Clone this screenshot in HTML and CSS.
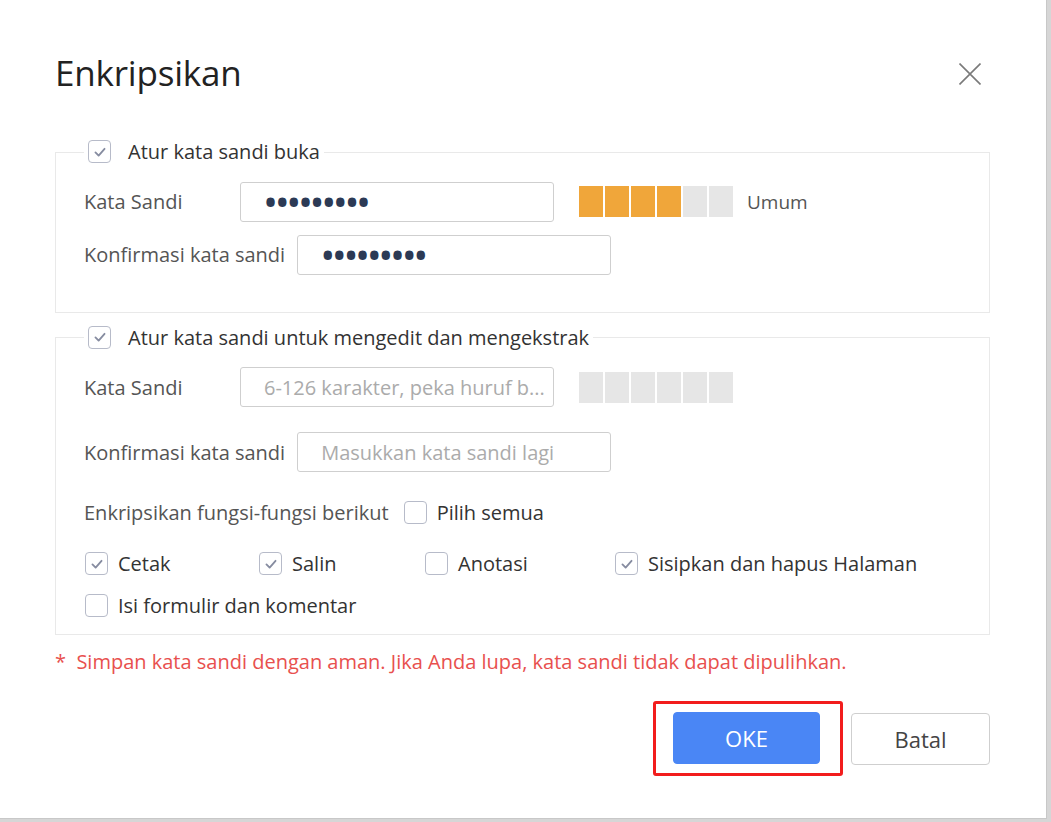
FILE: index.html
```html
<!DOCTYPE html>
<html lang="id">
<head>
    <meta charset="UTF-8">
    <meta name="viewport" content="width=device-width, initial-scale=1.0">
    <title>Enkripsikan</title>
    <link rel="stylesheet" href="styles.css">
</head>
<body>
    <div class="dialog">
        <div class="dialog-head">
            <h1>Enkripsikan</h1>
            <button class="close-btn" aria-label="Tutup">
                <svg width="22" height="22" viewBox="0 0 22 22"><path d="M0.5 0.5L21.5 21.5M21.5 0.5L0.5 21.5" stroke="#7a7a7a" stroke-width="1.6" fill="none"/></svg>
            </button>
        </div>

        <fieldset class="group" id="openGroup">
            <legend>
                <label class="check"><span class="box on"><svg viewBox="0 0 22 22"><path d="M6 11.5l3.5 3.5 6.5-7.5" /></svg></span>Atur kata sandi buka</label>
            </legend>
            <div class="row first">
                <label class="field-label" for="pw1">Kata Sandi</label>
                <input class="input pw" type="password" id="pw1" value="123456789">
                <div class="meter">
                    <span class="bar fill"></span><span class="bar fill"></span><span class="bar fill"></span><span class="bar fill"></span><span class="bar"></span><span class="bar"></span>
                </div>
                <span class="meter-text">Umum</span>
            </div>
            <div class="row second">
                <label class="field-label" for="pw1c">Konfirmasi kata sandi</label>
                <input class="input pw" type="password" id="pw1c" value="123456789" autofocus>
            </div>
        </fieldset>

        <fieldset class="group" id="editGroup">
            <legend>
                <label class="check"><span class="box on"><svg viewBox="0 0 22 22"><path d="M6 11.5l3.5 3.5 6.5-7.5" /></svg></span>Atur kata sandi untuk mengedit dan mengekstrak</label>
            </legend>
            <div class="row first">
                <label class="field-label" for="pw2">Kata Sandi</label>
                <input class="input" type="password" id="pw2" placeholder="6-126 karakter, peka huruf b...">
                <div class="meter">
                    <span class="bar"></span><span class="bar"></span><span class="bar"></span><span class="bar"></span><span class="bar"></span><span class="bar"></span>
                </div>
            </div>
            <div class="row third">
                <label class="field-label" for="pw2c">Konfirmasi kata sandi</label>
                <input class="input" type="password" id="pw2c" placeholder="Masukkan kata sandi lagi">
            </div>
            <div class="row funcs">
                <span class="field-label plain">Enkripsikan fungsi-fungsi berikut</span>
                <label class="check"><span class="box"></span>Pilih semua</label>
            </div>
            <div class="perms">
                <label class="check"><span class="box on"><svg viewBox="0 0 22 22"><path d="M6 11.5l3.5 3.5 6.5-7.5" /></svg></span>Cetak</label>
                <label class="check"><span class="box on"><svg viewBox="0 0 22 22"><path d="M6 11.5l3.5 3.5 6.5-7.5" /></svg></span>Salin</label>
                <label class="check"><span class="box"></span>Anotasi</label>
                <label class="check"><span class="box on"><svg viewBox="0 0 22 22"><path d="M6 11.5l3.5 3.5 6.5-7.5" /></svg></span>Sisipkan dan hapus Halaman</label>
                <label class="check wide"><span class="box"></span>Isi formulir dan komentar</label>
            </div>
        </fieldset>

        <p class="warning">*&nbsp; Simpan kata sandi dengan aman. Jika Anda lupa, kata sandi tidak dapat dipulihkan.</p>

        <div class="actions">
            <span class="highlight"><button class="btn primary">OKE</button></span>
            <button class="btn">Batal</button>
        </div>
    </div>
</body>
</html>
```

FILE: styles.css
```css
html, body {
    margin: 0;
    padding: 0;
}
body {
    background: #d6d6d6;
    font-family: "Open Sans", "Noto Sans", sans-serif;
    color: #333;
}
.dialog {
    width: 1047px;
    height: 819px;
    background: #fff;
    box-sizing: border-box;
    border-right: 1px solid #c8c8c8;
    border-bottom: 1px solid #c8c8c8;
    padding: 0 56px 0 55px;
}
.dialog-head {
    display: flex;
    justify-content: space-between;
    align-items: flex-start;
    height: 138px;
    padding-top: 49px;
    box-sizing: border-box;
}
.dialog-head h1 {
    margin: 0;
    font-weight: 400;
    font-size: 35px;
    line-height: 48px;
    color: #222;
    letter-spacing: -0.2px;
}
.close-btn {
    background: none;
    border: none;
    padding: 0;
    margin: 14px 9px 0 0;
    cursor: pointer;
    width: 22px;
    height: 22px;
}
.close-btn svg {
    display: block;
}
.group {
    border: 1px solid #e9e9e9;
    margin: 0;
    padding: 0 28px;
    min-width: 0;
}
#editGroup {
    margin-top: 11px;
}
.group legend {
    padding: 0 4px;
    margin-left: 0;
}
.group legend .box {
    margin-right: 17px;
}
.check {
    display: inline-flex;
    align-items: center;
    font-size: 20px;
    line-height: 27px;
    color: #333;
    cursor: pointer;
    white-space: nowrap;
}
.box {
    flex: none;
    width: 23px;
    height: 23px;
    box-sizing: border-box;
    border: 1.5px solid #b7bbc9;
    border-radius: 4px;
    background: #fff;
    margin-right: 10px;
    display: inline-flex;
    align-items: center;
    justify-content: center;
}
.box svg {
    width: 20px;
    height: 20px;
}
.box svg path {
    fill: none;
    stroke: #868ca0;
    stroke-width: 2;
    stroke-linecap: round;
    stroke-linejoin: round;
}
.row {
    display: flex;
    align-items: center;
}
.row.first {
    margin-top: 15px;
}
.row.second {
    margin-top: 13px;
    margin-bottom: 37px;
}
.row.third {
    margin-top: 25px;
}
.field-label {
    min-width: 144px;
    margin-right: 12px;
    font-size: 20px;
    color: #555;
}
.field-label.plain {
    min-width: 0;
    margin-right: 15px;
}
.input {
    width: 314px;
    height: 40px;
    box-sizing: border-box;
    border: 1px solid #cfcfcf;
    border-radius: 3px;
    padding: 0 2px 0 23px;
    font-family: "Open Sans", "Noto Sans", sans-serif;
    font-size: 20px;
    color: #333;
    outline: none;
    text-overflow: ellipsis;
}
.input::placeholder {
    color: #ababab;
}
.input.pw {
    font-size: 40px;
    letter-spacing: -3.4px;
    padding-left: 22px;
    color: #2c3a55;
    caret-color: #000;
}
.meter {
    display: flex;
    gap: 2px;
    margin-left: 25px;
}
.bar {
    width: 24px;
    height: 31px;
    background: #e6e6e6;
}
.bar.fill {
    background: #f0a63a;
}
.meter-text {
    margin-left: 14px;
    font-size: 19px;
    color: #555;
}
.row.funcs {
    margin-top: 27px;
}
.perms {
    display: grid;
    grid-template-columns: 174px 166px 190px auto;
    row-gap: 15px;
    margin-top: 24px;
    margin-bottom: 15px;
}
.perms .check {
    margin-left: 1px;
}
.perms .wide {
    grid-column: 1 / -1;
}
.warning {
    margin: 13px 0 0;
    font-size: 20px;
    line-height: 27px;
    color: #e8504e;
}
.actions {
    display: flex;
    justify-content: flex-end;
    align-items: center;
    margin-top: 26px;
}
.highlight {
    display: inline-block;
    border: 3px solid #f21d1d;
    border-radius: 3px;
    padding: 8px 20px 9px 17px;
    margin-right: 8px;
}
.btn {
    display: block;
    width: 139px;
    height: 52px;
    border: 1px solid #cfcfcf;
    border-radius: 4px;
    background: #fff;
    font-family: "Open Sans", "Noto Sans", sans-serif;
    font-size: 22px;
    color: #444;
    cursor: pointer;
}
.btn.primary {
    width: 147px;
    background: #4a86f5;
    border-color: #4a86f5;
    color: #fff;
}
```
